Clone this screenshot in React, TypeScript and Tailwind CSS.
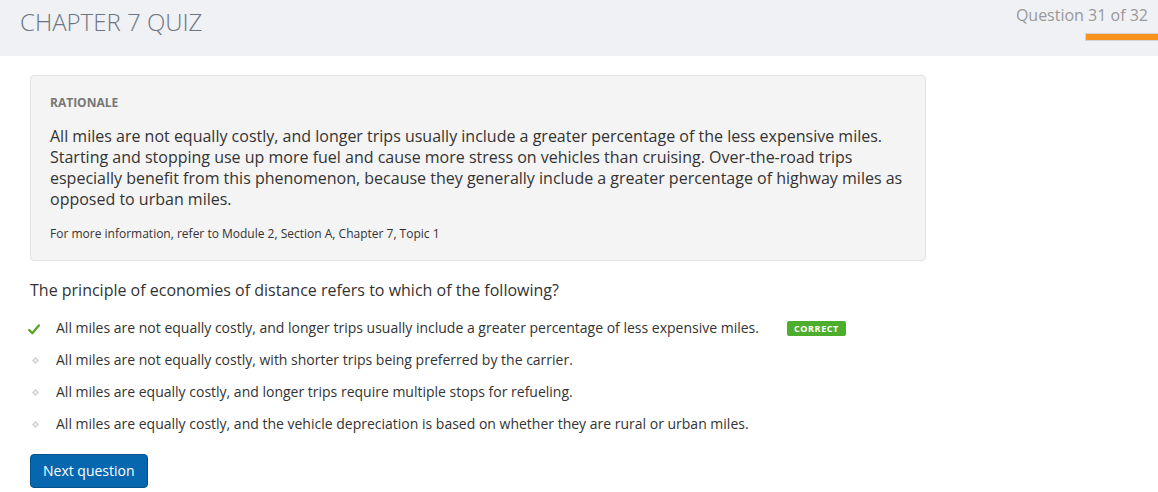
import React from "react";

const options = [
  { text: "All miles are not equally costly, and longer trips usually include a greater percentage of less expensive miles.", correct: true },
  { text: "All miles are not equally costly, with shorter trips being preferred by the carrier.", correct: false },
  { text: "All miles are equally costly, and longer trips require multiple stops for refueling.", correct: false },
  { text: "All miles are equally costly, and the vehicle depreciation is based on whether they are rural or urban miles.", correct: false },
];

export default function App() {
  return (
    <div className="w-[1158px] h-[492px] bg-white overflow-hidden" style={{ fontFamily: '"Open Sans", sans-serif' }}>
      <header className="h-[56px] bg-[#f0f1f5] flex justify-between">
        <h1 className="pl-[20px] pt-[5px] text-[24px] font-light text-[#6d7582] leading-[34px]">CHAPTER 7 QUIZ</h1>
        <div className="flex flex-col items-end pt-[4px]">
          <div className="pr-[10px] text-[16px] text-[#999] leading-[22px]">Question 31 of 32</div>
          <div className="mt-[7px] w-[73px] h-[8px] bg-[#f7921e] border border-[#d4d4d4] border-r-0"></div>
        </div>
      </header>
      <main className="pl-[30px] pt-[19px]">
        <div className="w-[896px] bg-[#f4f4f4] border border-[#e3e3e3] rounded-[4px] px-[19px] pt-[18px] pb-[18px]">
          <div className="text-[12px] font-bold text-[#777] leading-[17px]">RATIONALE</div>
          <p className="mt-[15px] text-[16px] text-[#333] leading-[21px]">
            All miles are not equally costly, and longer trips usually include a greater percentage of the less expensive miles. Starting and stopping use up more fuel and cause more stress on vehicles than cruising. Over-the-road trips especially benefit from this phenomenon, because they generally include a greater percentage of highway miles as opposed to urban miles.
          </p>
          <p className="mt-[15px] text-[12px] text-[#333] leading-[17px]">For more information, refer to Module 2, Section A, Chapter 7, Topic 1</p>
        </div>
        <div className="mt-[18px] text-[16px] text-[#333] leading-[22px]">The principle of economies of distance refers to which of the following?</div>
        <ul className="mt-[17px] flex flex-col gap-[12px]">
          {options.map((o, i) => (
            <li key={i} className="flex items-center h-[20px]">
              <span className="w-[26px] flex items-center">
                {o.correct ? (
                  <svg width="12" height="11" viewBox="0 0 12 11" className="-ml-[2px] mt-[2px]">
                    <path d="M1.2 6 L4.3 9.2 L10.8 1.5" fill="none" stroke="#5fa52d" strokeWidth="2.4" strokeLinecap="round" strokeLinejoin="round" />
                  </svg>
                ) : (
                  <svg width="7" height="7" viewBox="0 0 7 7" className="ml-[2px] mt-[1px]">
                    <path d="M3.5 0 L7 3.5 L3.5 7 L0 3.5 Z" fill="#d0d0d0" />
                    <rect x="2.5" y="2.5" width="2" height="2" fill="#fff" />
                  </svg>
                )}
              </span>
              <span className="text-[14px] text-[#333] leading-[20px]">{o.text}</span>
              {o.correct && (
                <span className="ml-[28px] h-[15px] px-[7px] bg-[#4cae2c] rounded-[2px] text-white text-[9px] font-bold tracking-[0.6px] leading-[15px]">CORRECT</span>
              )}
            </li>
          ))}
        </ul>
        <button className="mt-[20px] h-[34px] px-[12px] bg-[#0767ae] border border-[#00528f] rounded-[4px] text-white text-[14px] leading-[20px]">Next question</button>
      </main>
    </div>
  );
}
